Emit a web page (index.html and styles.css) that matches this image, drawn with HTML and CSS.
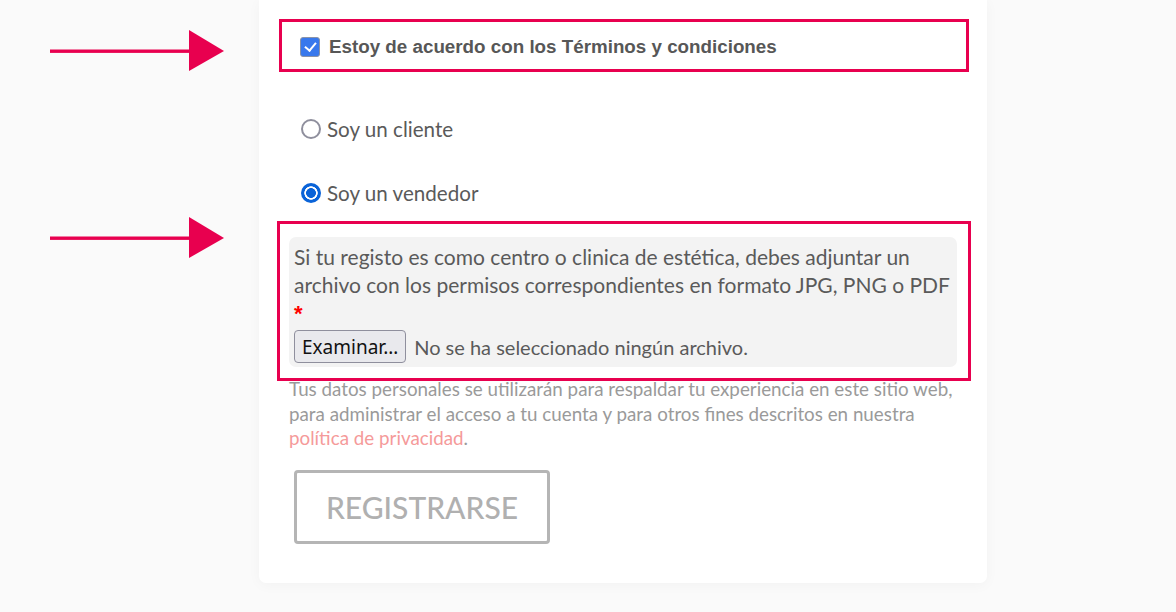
FILE: index.html
```html
<!DOCTYPE html>
<html lang="es">
<head>
<meta charset="utf-8">
<title>Registro</title>
<link rel="stylesheet" href="styles.css">
</head>
<body>
<div class="page">
  <svg class="arrow arrow-1" width="180" height="42" viewBox="0 0 180 42" aria-hidden="true">
    <rect x="0" y="19.5" width="142" height="3.4" fill="#e8004f"/>
    <polygon points="139,0 174,21 139,41" fill="#e8004f"/>
  </svg>
  <svg class="arrow arrow-2" width="180" height="42" viewBox="0 0 180 42" aria-hidden="true">
    <rect x="0" y="19.5" width="142" height="3.4" fill="#e8004f"/>
    <polygon points="139,0 174,21 139,41" fill="#e8004f"/>
  </svg>

  <form class="card">
    <div class="mark mark-terms">
      <label class="terms">
        <input type="checkbox" class="check" checked>
        <span>Estoy de acuerdo con los Términos y condiciones</span>
      </label>
    </div>

    <div class="roles">
      <label class="role">
        <input type="radio" name="role" class="radio">
        <span>Soy un cliente</span>
      </label>
      <label class="role">
        <input type="radio" name="role" class="radio" checked>
        <span>Soy un vendedor</span>
      </label>
    </div>

    <div class="mark mark-file">
      <div class="upload">
        <p class="upload-text">Si tu registo es como centro o clinica de estética, debes adjuntar un archivo con los permisos correspondientes en formato JPG, PNG o PDF <span class="req">*</span></p>
        <label class="file">
          <span class="file-btn">Examinar…</span>
          <span class="file-name">No se ha seleccionado ningún archivo.</span>
        </label>
      </div>
    </div>

    <p class="privacy">Tus datos personales se utilizarán para respaldar tu experiencia en este sitio web, para administrar el acceso a tu cuenta y para otros fines descritos en nuestra <a href="#" class="privacy-link">política de privacidad</a>.</p>

    <button type="button" class="submit">REGISTRARSE</button>
  </form>
</div>
</body>
</html>
```

FILE: styles.css
```css
* { box-sizing: border-box; }

html, body {
  margin: 0;
  padding: 0;
  background: #fafafa;
}

body {
  font-family: Lato, "Noto Sans", sans-serif;
  color: #5a5a5a;
}

.page {
  position: relative;
  width: 1176px;
  height: 612px;
  overflow: hidden;
  display: flex;
  flex-direction: column;
  align-items: flex-start;
}

.arrow {
  position: absolute;
  left: 50px;
}
.arrow-1 { top: 30px; }
.arrow-2 { top: 217px; }

.card {
  margin-left: 259px;
  width: 728px;
  background: #fff;
  border-radius: 0 0 7px 7px;
  box-shadow: 0 2px 14px rgba(0, 0, 0, 0.035);
  padding: 19px 30px 39px 30px;
  display: flex;
  flex-direction: column;
  align-items: stretch;
}

.mark {
  border: 3px solid #e8004f;
}

.mark-terms {
  margin: 0 -12px 0 -10px;
  height: 53px;
  padding: 2px 0 0 18px;
  display: flex;
  align-items: center;
}

.terms {
  display: flex;
  align-items: center;
  gap: 9px;
  font-family: "Liberation Sans", Arial, sans-serif;
  font-weight: bold;
  font-size: 18.8px;
  color: #575757;
}

.check {
  appearance: none;
  -webkit-appearance: none;
  margin: 0;
  width: 20px;
  height: 20px;
  border-radius: 3px;
  background: #3878ec;
  border: 1px solid #8a93a8;
  position: relative;
  flex: none;
}
.check::after {
  content: "";
  position: absolute;
  left: 5.5px;
  top: 2.5px;
  width: 5px;
  height: 9px;
  border: solid #fff;
  border-width: 0 2px 2px 0;
  transform: rotate(40deg);
}

.roles {
  margin-top: 43px;
  display: flex;
  flex-direction: column;
  gap: 36px;
  padding-left: 12px;
}

.role {
  display: flex;
  align-items: center;
  gap: 6px;
  height: 28px;
  font-size: 20.6px;
  color: #5a5a5a;
}

.radio {
  appearance: none;
  -webkit-appearance: none;
  margin: 0;
  width: 20px;
  height: 20px;
  border-radius: 50%;
  border: 2px solid #8f8f9d;
  background: #fff;
  flex: none;
}
.radio:checked {
  border: none;
  background: radial-gradient(circle, #0a63d8 0 4.6px, #fff 5.2px 6.4px, #0a63d8 7px);
}

.mark-file {
  margin: 14px -14px -4px -12px;
  padding: 13px 11px 11px 9px;
}

.upload {
  background: #f3f3f3;
  border-radius: 7px;
  padding: 6px 5px 4px 5px;
}

.upload-text {
  margin: 0;
  font-size: 21px;
  line-height: 28px;
  color: #5a5a5a;
}

.req {
  display: block;
  color: #ff0000;
  font-family: "Liberation Sans", Arial, sans-serif;
  font-weight: bold;
  font-size: 22px;
  line-height: 28px;
  padding-top: 1px;
  height: 28px;
}

.file {
  margin-top: 3px;
  display: flex;
  align-items: center;
  gap: 8px;
}

.file-btn {
  height: 33px;
  padding: 0 7px;
  display: flex;
  align-items: center;
  border: 1px solid #8f8f9d;
  border-radius: 4px;
  background: #e9e9ed;
  color: #111;
  font-size: 19px;
  font-family: "Noto Sans", Lato, sans-serif;
}

.file-name {
  font-size: 20px;
  color: #5a5a5a;
}

.privacy {
  margin: 0 -6px 0 0;
  font-size: 18.8px;
  line-height: 24.5px;
  color: #9a9a9a;
}

.privacy-link {
  color: #f59a9a;
  text-decoration: none;
}

.submit {
  margin: 19px 0 0 5px;
  align-self: flex-start;
  width: 256px;
  height: 74px;
  border: 3px solid #b5b5b5;
  border-radius: 4px;
  background: #fff;
  color: #b0b0b0;
  font-family: Lato, sans-serif;
  font-size: 30px;
  font-weight: 500;
  padding: 0;
}
```
